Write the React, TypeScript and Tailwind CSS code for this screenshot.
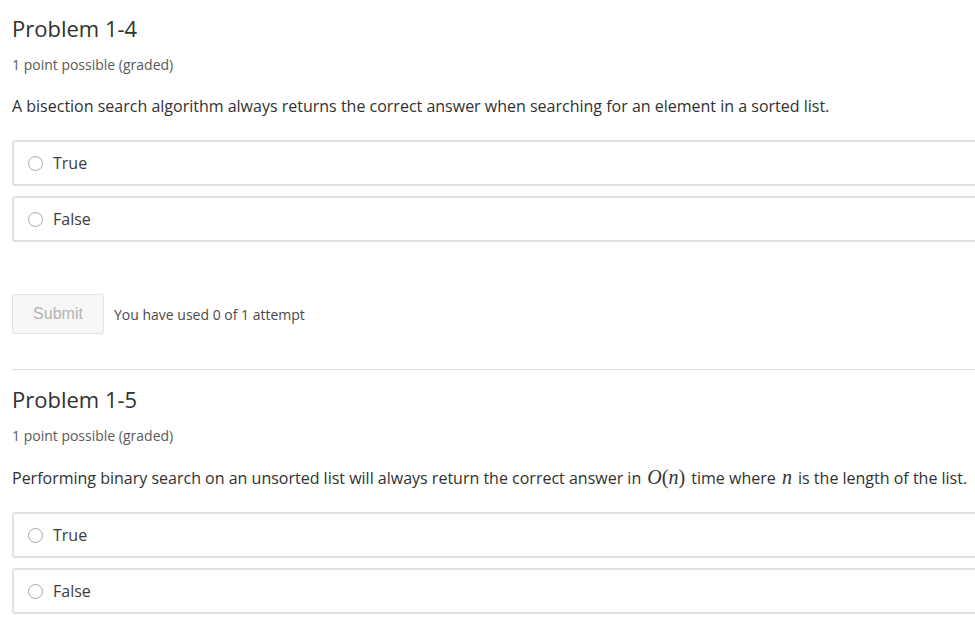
import React from "react";

function Radio() {
  return (
    <span className="inline-block w-[15px] h-[15px] rounded-full border border-[#a8a8a8] bg-white shrink-0" />
  );
}

function Option({ label }: { label: string }) {
  return (
    <div className="flex items-center h-[46px] border-2 border-r-0 border-[#e2e2e2] rounded-l-[3px] pl-[14px] gap-[10px]">
      <Radio />
      <span className="text-[16px] text-[#3c3c3c]">{label}</span>
    </div>
  );
}

function Math({ children }: { children: React.ReactNode }) {
  return (
    <span
      className="mx-[2px] text-[20px] leading-[20px] text-[#333]"
      style={{ fontFamily: '"Liberation Serif", "DejaVu Serif", serif' }}
    >
      {children}
    </span>
  );
}

export default function App() {
  return (
    <div
      className="w-[975px] h-[621px] overflow-hidden bg-white pl-[12px] text-[#333]"
      style={{ fontFamily: '"Open Sans", "Noto Sans", sans-serif' }}
    >
      <div className="pt-[12px]">
        <h2 className="text-[22px] leading-[32px] text-[#313131]">Problem 1-4</h2>
        <div className="mt-[12px] text-[14px] leading-[18px] text-[#5a5a5a]">1 point possible (graded)</div>
        <p className="mt-[22px] text-[16px] leading-[20px] text-[#313131]">
          A bisection search algorithm always returns the correct answer when searching for an element in a sorted list.
        </p>
        <div className="mt-[24px] flex flex-col gap-[10px]">
          <Option label="True" />
          <Option label="False" />
        </div>
        <div className="mt-[52px] flex items-center gap-[10px]">
          <button
            className="w-[92px] h-[40px] rounded-[3px] border border-[#e3e3e3] bg-[#f7f7f7] text-[16px] text-[#b3b3b3]"
            style={{ fontFamily: '"Liberation Sans", Arial, sans-serif' }}
          >
            Submit
          </button>
          <span className="text-[14px] text-[#4a4a4a]">You have used 0 of 1 attempt</span>
        </div>
        <div className="mt-[35px] border-t border-[#dddddd]" />
      </div>
      <div className="pt-[13px]">
        <h2 className="text-[22px] leading-[32px] text-[#313131]">Problem 1-5</h2>
        <div className="mt-[12px] text-[14px] leading-[18px] text-[#5a5a5a]">1 point possible (graded)</div>
        <p className="mt-[22px] text-[16px] leading-[20px] text-[#313131]">
          Performing binary search on an unsorted list will always return the correct answer in{" "}
          <Math>
            <i>O</i>(<i>n</i>)
          </Math>{" "}
          time where <Math><i>n</i></Math> is the length of the list.
        </p>
        <div className="mt-[24px] flex flex-col gap-[10px]">
          <Option label="True" />
          <Option label="False" />
        </div>
      </div>
    </div>
  );
}
